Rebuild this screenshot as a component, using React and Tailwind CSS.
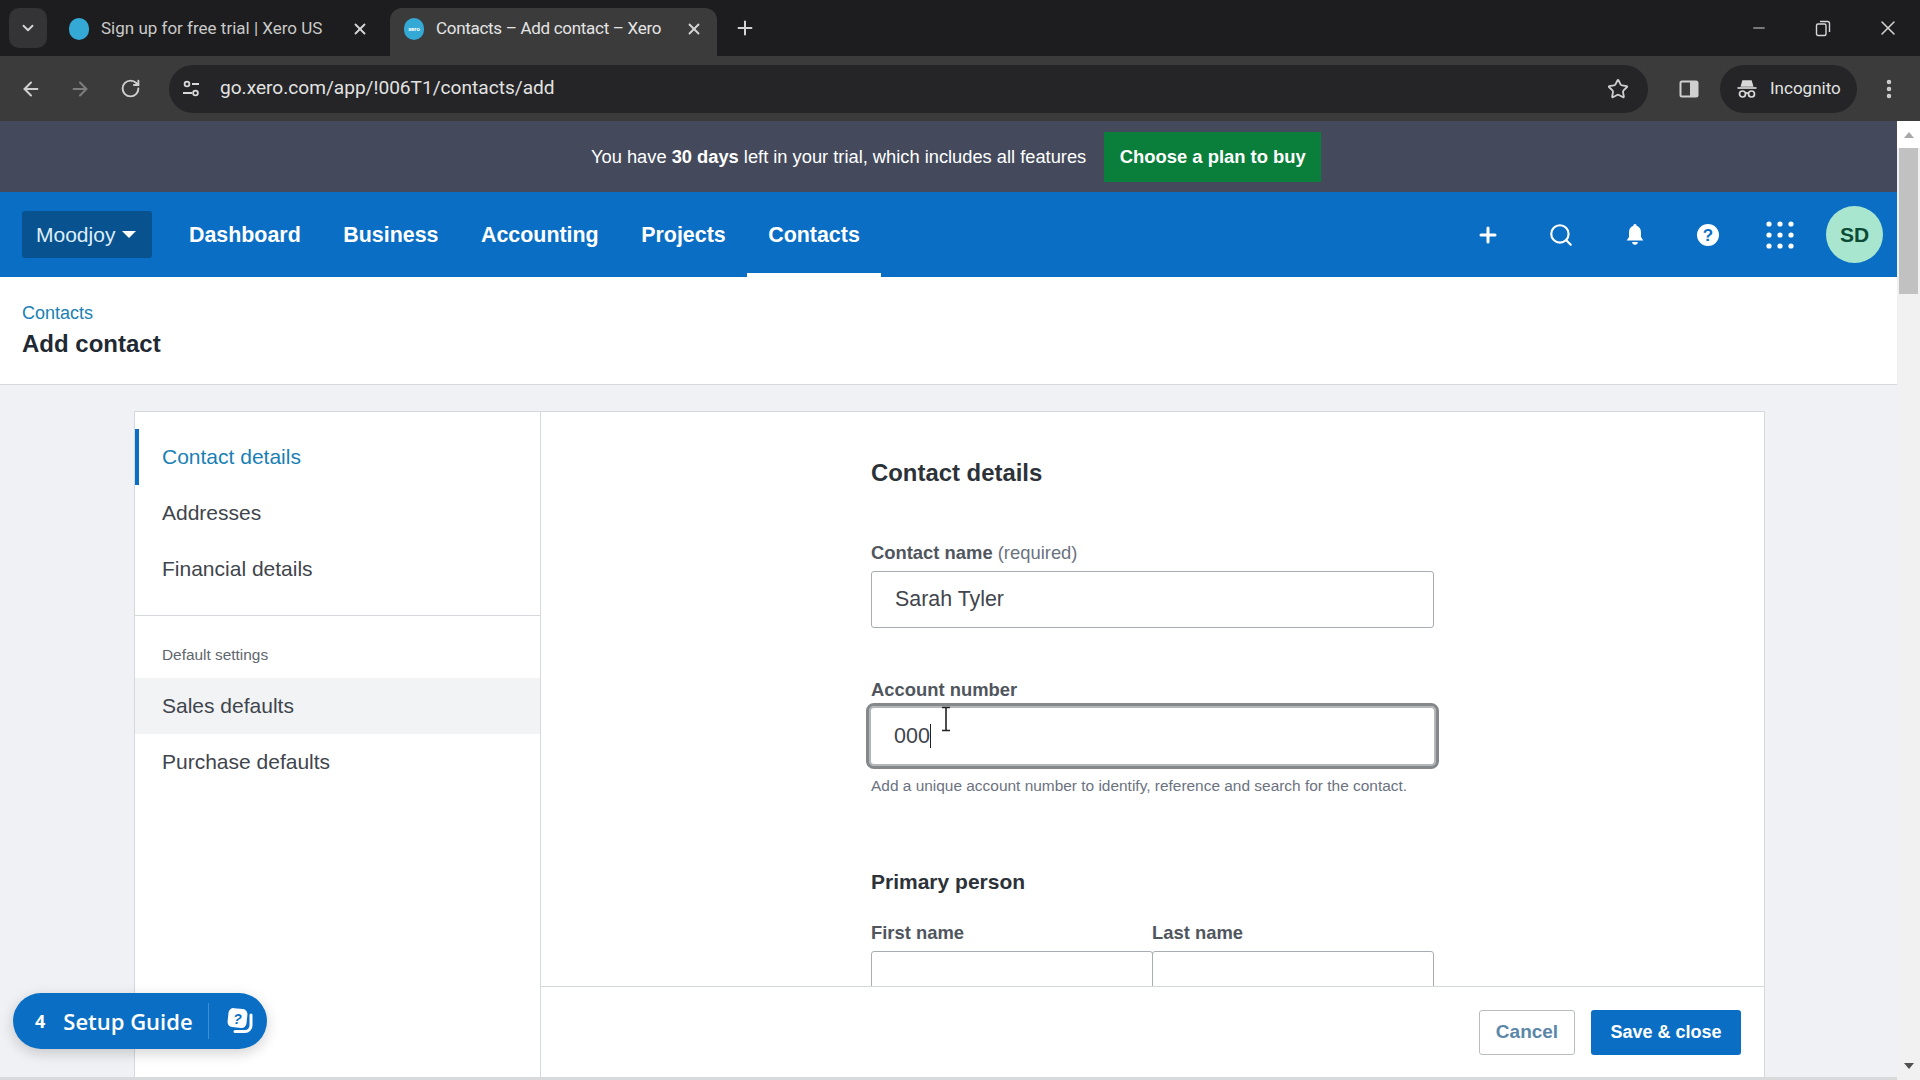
import { ArrowLeft, ArrowRight, ChevronDown, Minus, MoreVertical, Plus, RotateCw, Search, Star, X } from 'lucide-react'

const chrome = { fontFamily: 'Roboto, "Noto Sans", sans-serif' }

function Favicon({ wordmark }) {
  return (
    <span className="w-[20px] h-[22px] rounded-full bg-[#35a9d6] shrink-0 flex items-center justify-center text-[6px] font-bold text-white">
      {wordmark ? 'xero' : ''}
    </span>
  )
}

function TuneIcon() {
  return (
    <svg width="20" height="20" viewBox="0 0 20 20" fill="none" stroke="#d8d8d8" strokeWidth="1.8">
      <circle cx="6" cy="5" r="2.4" />
      <path d="M11 5h7M2 14h9" />
      <circle cx="14.5" cy="14" r="2.4" />
    </svg>
  )
}

function IncognitoIcon() {
  return (
    <svg width="22" height="22" viewBox="0 0 22 22" fill="none" stroke="#d8d8d8" strokeWidth="1.7">
      <path d="M7 3h8l1.4 5H5.600z" fill="#d8d8d8" />
      <path d="M1.500 10h19" />
      <circle cx="6.500" cy="16" r="3" />
      <circle cx="15.500" cy="16" r="3" />
      <path d="M9.500 15.500c1-.7 2-.7 3 0" />
    </svg>
  )
}

function RestoreIcon() {
  return (
    <svg width="16" height="18" viewBox="0 0 16 18" fill="none" stroke="#d8d8d8" strokeWidth="1.400">
      <rect x="1.500" y="5" width="9.500" height="11.500" rx="1.500" />
      <path d="M5 2.500h7.500a2 2 0 0 1 2 2V13" />
    </svg>
  )
}

function SidePanelIcon() {
  return (
    <svg width="22" height="22" viewBox="0 0 22 22">
      <rect x="2.500" y="3.500" width="17" height="15" rx="1.500" fill="none" stroke="#cfcfcf" strokeWidth="2" />
      <rect x="12" y="4" width="7" height="14" fill="#cfcfcf" />
    </svg>
  )
}

function BellIcon() {
  return (
    <svg width="22" height="24" viewBox="0 0 22 24" fill="#fff">
      <path d="M11 1a1.600 1.600 0 0 1 1.600 1.800c2.900.8 4.400 3.300 4.400 6.700v4.500l2.300 3.500H2.700L5 14V9.500c0-3.400 1.500-5.900 4.400-6.700A1.600 1.600 0 0 1 11 1z" />
      <path d="M8.200 19h5.600a2.800 2.800 0 0 1-5.600 0z" />
    </svg>
  )
}

function HelpIcon() {
  return (
    <svg width="24" height="24" viewBox="0 0 24 24">
      <circle cx="12" cy="12" r="11" fill="#fff" />
      <text x="12" y="18" textAnchor="middle" fontSize="17" fontWeight="700" fill="#0a6fc4" fontFamily="Liberation Sans">?</text>
    </svg>
  )
}

function AppsIcon() {
  const dots = [3, 14, 25]
  return (
    <svg width="28" height="28" viewBox="0 0 28 28" fill="#fff">
      {dots.map(y => dots.map(x => <circle key={`${x}-${y}`} cx={x} cy={y} r="2.600" />))}
    </svg>
  )
}

function GuideIcon() {
  return (
    <svg width="30" height="30" viewBox="0 0 30 30">
      <path d="M10 25.500h10a6 6 0 0 0 6-6V9" fill="none" stroke="#fff" strokeWidth="3" strokeLinecap="round" />
      <rect x="3" y="2.500" width="19" height="19" rx="5" fill="#fff" transform="rotate(6 12 12)" />
      <text x="12.500" y="18" textAnchor="middle" fontSize="14" fontWeight="700" fontStyle="italic" fill="#0a6fc4" fontFamily="Liberation Sans">?</text>
    </svg>
  )
}

function Field({ label, hint, value, className }) {
  return (
    <div className={className}>
      <div className="text-[18.400px] leading-[22px] font-bold text-[#50565e]">
        {label}
        {hint && <span className="font-normal text-[#6b7280]"> {hint}</span>}
      </div>
      <div className="mt-[7px] h-[57px] border border-[#a8adb3] rounded-[3px] flex items-center pl-[23px] text-[21.400px] text-[#3f454c]">
        {value}
      </div>
    </div>
  )
}

const navItems = ['Dashboard', 'Business', 'Accounting', 'Projects', 'Contacts']

export default function App() {
  return (
    <div className="w-[1920px] h-[1080px] overflow-hidden flex flex-col bg-white" style={{ fontFamily: '"Liberation Sans", Arial, sans-serif' }}>
      {/* tab strip */}
      <div className="h-14 shrink-0 bg-[#1d1d1f] flex items-end text-[#d4d4d4] text-[17px]" style={chrome}>
        <div className="ml-[9px] mb-[8px] w-[38px] h-[40px] rounded-[10px] bg-[#343436] flex items-center justify-center">
          <ChevronDown size={18} strokeWidth={2.500} />
        </div>
        <div className="w-[343px] h-[48px] flex items-center pl-[22px] pr-[21px] pb-[7px] gap-[12px] shrink-0">
          <Favicon />
          <span className="flex-1 whitespace-nowrap text-[#c9c9c9]">Sign up for free trial | Xero US</span>
          <X size={18} strokeWidth={2.500} />
        </div>
        <div className="w-[327px] h-[48px] rounded-t-[12px] bg-[#3b3b3b] flex items-center pl-[14px] pr-[14px] pb-[7px] gap-[12px] shrink-0">
          <Favicon wordmark />
          <span className="flex-1 whitespace-nowrap tracking-[-0.3px] text-[#e4e4e4]">Contacts – Add contact – Xero</span>
          <X size={18} strokeWidth={2.500} />
        </div>
        <div className="ml-[17px] mb-[17px]"><Plus size={22} strokeWidth={2.200} /></div>
        <div className="ml-auto flex items-center h-14 pr-[20px]">
          <Minus size={18} strokeWidth={1.500} />
          <span className="ml-[47px]"><RestoreIcon /></span>
          <X size={24} strokeWidth={1.500} className="ml-[45px]" />
        </div>
      </div>

      {/* toolbar */}
      <div className="h-[65px] shrink-0 bg-[#3b3b3b] flex items-center text-[#cfcfcf]" style={chrome}>
        <ArrowLeft size={22} className="ml-[20px]" strokeWidth={2.200} />
        <ArrowRight size={22} className="ml-[27px] text-[#7d7d7d]" strokeWidth={2.200} />
        <RotateCw size={21} className="ml-[29px]" strokeWidth={2.200} />
        <div className="ml-[28px] w-[1479px] h-[48px] rounded-full bg-[#252527] flex items-center pl-[12px] pr-[19px]">
          <TuneIcon />
          <span className="ml-[19px] flex-1 text-[19.100px] text-[#e2e2e2]">go.xero.com/app/!006T1/contacts/add</span>
          <Star size={22} strokeWidth={2} />
        </div>
        <div className="ml-[30px]"><SidePanelIcon /></div>
        <div className="ml-[20px] w-[137px] h-[48px] rounded-full bg-[#252527] flex items-center pl-[16px] gap-[12px] text-[17px] text-[#e2e2e2]">
          <IncognitoIcon />
          Incognito
        </div>
        <MoreVertical size={24} className="ml-[20px]" strokeWidth={2.500} />
      </div>

      <div className="flex-1 min-h-0 flex relative">
        <div className="flex-1 min-w-0 flex flex-col bg-[#eff1f4]">
          {/* trial banner */}
          <div className="h-[71px] shrink-0 bg-[#444a5c] flex items-center pl-[591px] text-[18.300px] text-white">
            <span>You have <b>30 days</b> left in your trial, which includes all features</span>
            <button className="ml-[18px] h-[50px] w-[217px] bg-[#0a7f3b] font-bold text-[18.400px] text-white">Choose a plan to buy</button>
          </div>

          {/* xero nav */}
          <div className="h-[85px] shrink-0 bg-[#0a6fc4] flex items-center pl-[22px] text-white">
            <div className="w-[130px] h-[47px] rounded-[3px] bg-[#07528f] flex items-center pl-[14px] text-[21px] text-[#dfeefa]">
              Moodjoy
              <span className="ml-[7px] w-0 h-0 border-x-[7px] border-x-transparent border-t-[7px] border-t-white" />
            </div>
            <div className="ml-[15.700px] flex h-full text-[21.400px] font-bold">
              {navItems.map(item => (
                <div key={item} className={`relative px-[21.300px] pt-[2px] flex items-center ${item === 'Contacts' ? 'after:absolute after:left-0 after:right-0 after:bottom-0 after:h-[4px] after:bg-white' : ''}`}>
                  {item}
                </div>
              ))}
            </div>
            <div className="ml-auto flex items-center pr-[14px]">
              <Plus size={24} strokeWidth={3} />
              <Search size={26} strokeWidth={2} className="ml-[48px]" />
              <span className="ml-[50px]"><BellIcon /></span>
              <div className="ml-[50px]"><HelpIcon /></div>
              <div className="ml-[46px]"><AppsIcon /></div>
              <div className="ml-[32px] w-[57px] h-[57px] rounded-full bg-[#a8e6cf] flex items-center justify-center text-[21px] font-bold text-[#0d4a36]">SD</div>
            </div>
          </div>

          {/* page header */}
          <div className="h-[108px] shrink-0 bg-white border-b border-[#d5d8dc] pl-[22px] pt-[25px]">
            <div className="text-[18px] leading-[22px] text-[#1a7fb5]">Contacts</div>
            <div className="mt-[5px] text-[24px] leading-[30px] font-bold text-[#1f2933]">Add contact</div>
          </div>

          {/* add contact card */}
          <div className="flex-1 min-h-0 pt-[26px] pl-[134px] pr-[132px]">
            <div className="h-full bg-white border-x border-t border-[#d5d8dc] flex">
              <div className="w-[406px] shrink-0 border-r border-[#d5d8dc] pt-[17px] text-[21px] text-[#3f454c]">
                <div className="h-[56px] border-l-[4px] border-[#0a6fc4] pl-[23px] flex items-center text-[#1a7fb5]">Contact details</div>
                <div className="h-[56px] pl-[27px] flex items-center">Addresses</div>
                <div className="h-[56px] pl-[27px] flex items-center">Financial details</div>
                <div className="mt-[18px] border-t border-[#d5d8dc] pl-[27px] pt-[30px] pb-[14px] text-[15.400px] leading-[18px] text-[#5f666e]">Default settings</div>
                <div className="h-[56px] pl-[27px] flex items-center bg-[#f2f3f5]">Sales defaults</div>
                <div className="h-[56px] pl-[27px] flex items-center">Purchase defaults</div>
              </div>
              <div className="flex-1 min-w-0 flex flex-col">
                <div className="flex-1 min-h-0 overflow-hidden pl-[330px] pt-[47px] relative">
                  <div className="w-[563px]">
                    <h2 className="text-[23.900px] leading-[28px] font-bold text-[#2c3238]">Contact details</h2>
                    <Field className="mt-[55px]" label="Contact name" hint="(required)" value="Sarah Tyler" />
                    <div className="mt-[51px] text-[18.400px] leading-[22px] font-bold text-[#50565e]">Account number</div>
                    <div className="mt-[5px] h-[60px] -mx-[2px] border-[2px] border-[#b4b7ba] rounded-[5px] outline-[3px] outline-[#85888b] flex items-center pl-[23px] text-[21.500px] text-[#3f454c]">
                      000<span className="w-px h-[24px] bg-[#222]" />
                    </div>
                    <p className="mt-[11px] text-[15.450px] leading-[18px] text-[#6b7280]">Add a unique account number to identify, reference and search for the contact.</p>
                    <h3 className="mt-[74px] text-[21px] leading-[26px] font-bold text-[#2c3238]">Primary person</h3>
                    <div className="mt-[27px] flex">
                      <Field className="flex-1" label="First name" />
                      <Field className="flex-1 -ml-px" label="Last name" />
                    </div>
                  </div>
                  {/* text cursor */}
                  <svg className="absolute left-[399px] top-[294px]" width="12" height="26" viewBox="0 0 12 26" fill="none" stroke="#222" strokeWidth="1.600">
                    <path d="M2 1.500h8M6 1.500v23M2 24.500h8" />
                  </svg>
                </div>
                <div className="h-[91px] shrink-0 border-t border-[#d5d8dc] flex items-start justify-end pt-[23px] pr-[23px] gap-[16px] text-[19px] font-bold">
                  <button className="w-[96px] h-[45px] border-[1.500px] border-[#b9bdc1] rounded-[3px] text-[#5b87a8]">Cancel</button>
                  <button className="w-[150px] h-[45px] rounded-[3px] bg-[#0a6fc4] text-[18px] text-white">Save &amp; close</button>
                </div>
              </div>
            </div>
          </div>
          <div className="h-[3px] shrink-0 bg-[#d8d9db]" />
        </div>

        {/* page scrollbar */}
        <div className="w-[23px] shrink-0 bg-[#f1f1f1] flex flex-col items-center text-[#6f6f6f]">
          <div className="h-[27px] flex items-center bg-white w-full justify-center">
            <span className="w-0 h-0 border-x-[5px] border-x-transparent border-b-[6px] border-b-[#a8a8a8]" />
          </div>
          <div className="w-[19px] h-[146px] bg-[#c1c1c1]" />
          <span className="mt-auto mb-[11px] w-0 h-0 border-x-[5px] border-x-transparent border-t-[6px] border-t-[#505050]" />
        </div>

        {/* setup guide pill */}
        <div className="absolute left-[13px] bottom-[31px] w-[254px] h-[56px] rounded-full bg-[#0a6fc4] shadow-[0_4px_14px_rgba(0,0,0,0.18)] flex items-center pl-[22px] text-white" style={{ fontFamily: '"Open Sans", sans-serif' }}>
          <span className="text-[18px] font-bold">4</span>
          <span className="ml-[18px] text-[22px] font-semibold">Setup Guide</span>
          <span className="ml-[15px] w-px h-[36px] bg-[#3d8fd3]" />
          <span className="ml-[16px]"><GuideIcon /></span>
        </div>
      </div>
    </div>
  )
}
